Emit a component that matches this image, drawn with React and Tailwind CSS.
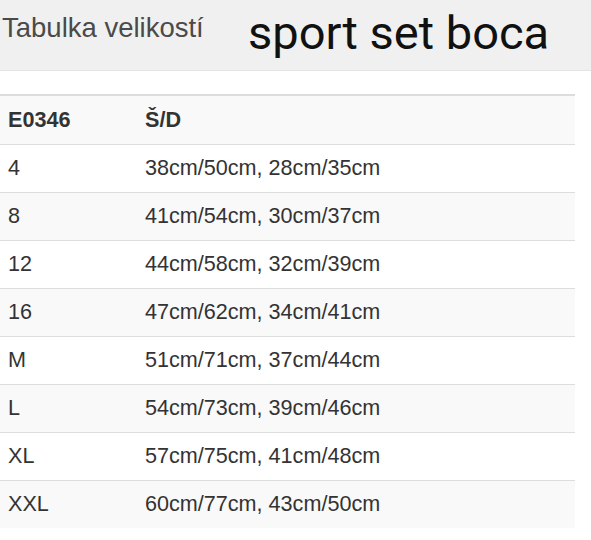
const rows = [
    ['4', '38cm/50cm, 28cm/35cm'],
    ['8', '41cm/54cm, 30cm/37cm'],
    ['12', '44cm/58cm, 32cm/39cm'],
    ['16', '47cm/62cm, 34cm/41cm'],
    ['M', '51cm/71cm, 37cm/44cm'],
    ['L', '54cm/73cm, 39cm/46cm'],
    ['XL', '57cm/75cm, 41cm/48cm'],
    ['XXL', '60cm/77cm, 43cm/50cm'],
];

export default function App() {
    return (
        <div className="w-[591px] h-[540px] bg-white overflow-hidden font-['Liberation_Sans',Arial,sans-serif]">
            {/* title bar */}
            <div className="h-[71px] bg-[#f0f0f0] border-b border-[#e4e4e4] flex items-start">
                <span className="pl-[2px] mt-[14px] w-[248px] shrink-0 text-[27.5px] leading-[27px] text-[#4a4a4a]">
                    Tabulka velikostí
                </span>
                <span className="mt-[4.5px] whitespace-nowrap font-['Roboto',sans-serif] text-[47px] leading-[55px] text-[#111]">
                    sport set boca
                </span>
            </div>

            <div className="pt-[23px]">
                <table className="w-[575px] border-collapse text-[21.6px] text-[#333]">
                    <thead>
                        <tr className="bg-[#f9f9f9] border-t-2 border-[#dddddd] h-[49px]">
                            <th className="w-[137px] pl-2 text-left align-middle font-bold">E0346</th>
                            <th className="pl-2 text-left align-middle font-bold">Š/D</th>
                        </tr>
                    </thead>
                    <tbody>
                        {rows.map(([size, dims], i) => (
                            <tr
                                key={size}
                                className={`h-[48px] border-t border-[#dddddd] ${i % 2 === 1 ? 'bg-[#f9f9f9]' : 'bg-white'}`}
                            >
                                <td className="pl-2 align-middle">{size}</td>
                                <td className="pl-2 align-middle">{dims}</td>
                            </tr>
                        ))}
                    </tbody>
                </table>
            </div>
        </div>
    );
}
